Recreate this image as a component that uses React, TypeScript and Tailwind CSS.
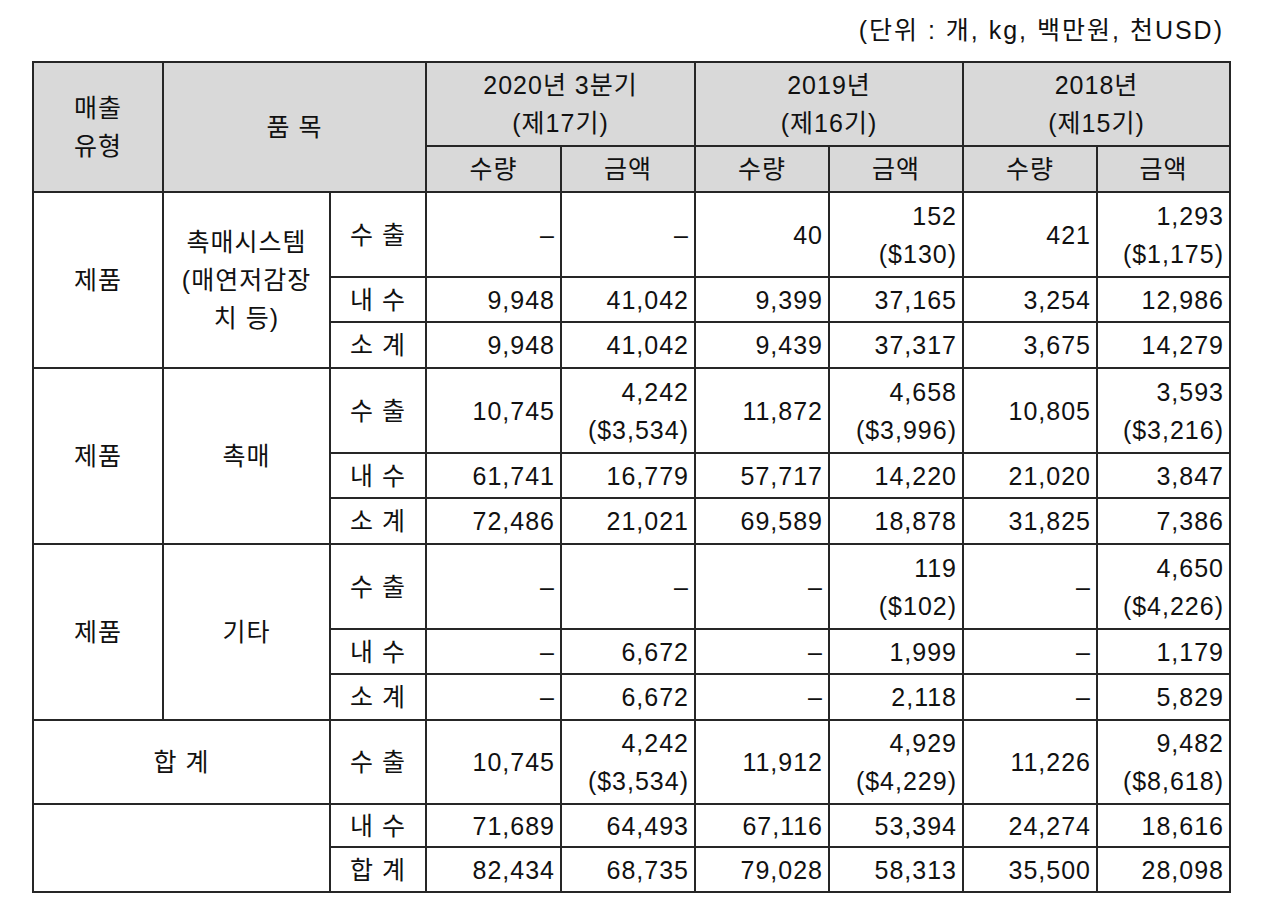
import React from "react";

type Row = {
    label: string;
    values: string[][]; // each cell: lines
    h: string;
};

const groups: {
    type: string;
    item: React.ReactNode;
    rows: Row[];
}[] = [
    {
        type: "제품",
        item: (
            <>
                촉매시스템
                <br />
                (매연저감장
                <br />
                치 등)
            </>
        ),
        rows: [
            {
                label: "수 출",
                h: "h-[85px]",
                values: [["–"], ["–"], ["40"], ["152", "($130)"], ["421"], ["1,293", "($1,175)"]],
            },
            {
                label: "내 수",
                h: "h-[45px]",
                values: [["9,948"], ["41,042"], ["9,399"], ["37,165"], ["3,254"], ["12,986"]],
            },
            {
                label: "소 계",
                h: "h-[46px]",
                values: [["9,948"], ["41,042"], ["9,439"], ["37,317"], ["3,675"], ["14,279"]],
            },
        ],
    },
    {
        type: "제품",
        item: "촉매",
        rows: [
            {
                label: "수 출",
                h: "h-[85px]",
                values: [["10,745"], ["4,242", "($3,534)"], ["11,872"], ["4,658", "($3,996)"], ["10,805"], ["3,593", "($3,216)"]],
            },
            {
                label: "내 수",
                h: "h-[45px]",
                values: [["61,741"], ["16,779"], ["57,717"], ["14,220"], ["21,020"], ["3,847"]],
            },
            {
                label: "소 계",
                h: "h-[46px]",
                values: [["72,486"], ["21,021"], ["69,589"], ["18,878"], ["31,825"], ["7,386"]],
            },
        ],
    },
    {
        type: "제품",
        item: "기타",
        rows: [
            {
                label: "수 출",
                h: "h-[85px]",
                values: [["–"], ["–"], ["–"], ["119", "($102)"], ["–"], ["4,650", "($4,226)"]],
            },
            {
                label: "내 수",
                h: "h-[45px]",
                values: [["–"], ["6,672"], ["–"], ["1,999"], ["–"], ["1,179"]],
            },
            {
                label: "소 계",
                h: "h-[46px]",
                values: [["–"], ["6,672"], ["–"], ["2,118"], ["–"], ["5,829"]],
            },
        ],
    },
];

const td = "border-2 border-[#262626] align-middle p-0";
const num = `${td} text-right pr-[5px]`;
const ctr = `${td} text-center`;
const head = `${td} text-center bg-[#d9d9d9] font-normal`;

function Cell({ lines }: { lines: string[] }) {
    return (
        <td className={num}>
            {lines.map((l, i) => (
                <div key={i}>{l}</div>
            ))}
        </td>
    );
}

export default function App() {
    return (
        <div
            className="bg-white min-h-screen text-[#111] text-[25px] tracking-[1px] leading-[38px]"
            style={{ fontFamily: '"Liberation Sans", "Noto Sans CJK KR", sans-serif' }}
        >
            <div className="pl-[32px] pt-[10px]">
                <div className="w-[1197px] text-right pr-[5px] h-[51px] leading-[40px] tracking-[2px]">
                    (단위 : 개, kg, 백만원, 천USD)
                </div>
                <table className="table-fixed border-collapse w-[1197px] border-2 border-[#555]">
                    <colgroup>
                        <col className="w-[130px]" />
                        <col className="w-[167px]" />
                        <col className="w-[96px]" />
                        <col className="w-[135px]" />
                        <col className="w-[134px]" />
                        <col className="w-[134px]" />
                        <col className="w-[134px]" />
                        <col className="w-[134px]" />
                        <col className="w-[133px]" />
                    </colgroup>
                    <thead>
                        <tr className="h-[84px]">
                            <th rowSpan={2} className={head}>
                                매출
                                <br />
                                유형
                            </th>
                            <th rowSpan={2} colSpan={2} className={head}>
                                품 목
                            </th>
                            <th colSpan={2} className={head}>
                                2020년 3분기
                                <br />
                                (제17기)
                            </th>
                            <th colSpan={2} className={head}>
                                2019년
                                <br />
                                (제16기)
                            </th>
                            <th colSpan={2} className={head}>
                                2018년
                                <br />
                                (제15기)
                            </th>
                        </tr>
                        <tr className="h-[46px]">
                            {["수량", "금액", "수량", "금액", "수량", "금액"].map((t, i) => (
                                <th key={i} className={head}>
                                    {t}
                                </th>
                            ))}
                        </tr>
                    </thead>
                    <tbody>
                        {groups.map((g, gi) =>
                            g.rows.map((r, ri) => (
                                <tr key={`${gi}-${ri}`} className={r.h}>
                                    {ri === 0 && (
                                        <>
                                            <td rowSpan={3} className={ctr}>
                                                {g.type}
                                            </td>
                                            <td rowSpan={3} className={ctr}>
                                                {g.item}
                                            </td>
                                        </>
                                    )}
                                    <td className={ctr}>{r.label}</td>
                                    {r.values.map((v, vi) => (
                                        <Cell key={vi} lines={v} />
                                    ))}
                                </tr>
                            ))
                        )}
                        <tr className="h-[84px]">
                            <td colSpan={2} className={ctr}>
                                합 계
                            </td>
                            <td className={ctr}>수 출</td>
                            <Cell lines={["10,745"]} />
                            <Cell lines={["4,242", "($3,534)"]} />
                            <Cell lines={["11,912"]} />
                            <Cell lines={["4,929", "($4,229)"]} />
                            <Cell lines={["11,226"]} />
                            <Cell lines={["9,482", "($8,618)"]} />
                        </tr>
                        <tr className="h-[43px]">
                            <td rowSpan={2} colSpan={2} className={ctr}></td>
                            <td className={ctr}>내 수</td>
                            <Cell lines={["71,689"]} />
                            <Cell lines={["64,493"]} />
                            <Cell lines={["67,116"]} />
                            <Cell lines={["53,394"]} />
                            <Cell lines={["24,274"]} />
                            <Cell lines={["18,616"]} />
                        </tr>
                        <tr className="h-[45px]">
                            <td className={ctr}>합 계</td>
                            <Cell lines={["82,434"]} />
                            <Cell lines={["68,735"]} />
                            <Cell lines={["79,028"]} />
                            <Cell lines={["58,313"]} />
                            <Cell lines={["35,500"]} />
                            <Cell lines={["28,098"]} />
                        </tr>
                    </tbody>
                </table>
            </div>
        </div>
    );
}
